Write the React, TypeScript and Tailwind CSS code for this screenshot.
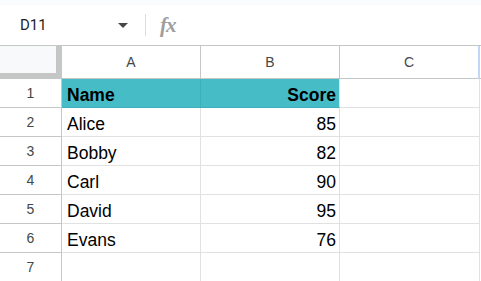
import React from "react";

const rows: { name: string; score: string; header?: boolean }[] = [
  { name: "Name", score: "Score", header: true },
  { name: "Alice", score: "85" },
  { name: "Bobby", score: "82" },
  { name: "Carl", score: "90" },
  { name: "David", score: "95" },
  { name: "Evans", score: "76" },
  { name: "", score: "" },
];

export default function App() {
  return (
    <div className="w-[481px] h-[281px] overflow-hidden bg-white font-['Liberation_Sans',Arial,sans-serif]">
      {/* top strip */}
      <div className="h-[5px] bg-[#f9fbfd]" />

      {/* name box + formula bar */}
      <div className="h-[41px] flex items-center border-b border-[#c4c7c5]">
        <div className="w-[100px] pl-[20px] text-[15px] text-[#1f1f1f] font-['Roboto',sans-serif]">D11</div>
        <svg width="10" height="5" viewBox="0 0 10 5" className="ml-[18px]">
          <path d="M0 0 L10 0 L5 5 Z" fill="#444746" />
        </svg>
        <div className="ml-[17px] w-px h-[22px] bg-[#dadce0]" />
        <div className="ml-[14px] text-[21px] italic font-bold tracking-[-1px] text-[#9e9e9e] font-['Liberation_Serif',serif] leading-none">
          fx
        </div>
      </div>

      {/* column headers */}
      <div className="grid grid-cols-[62px_139px_139px_140px_1fr] h-[33px]">
        <div className="bg-[#f8f9fa] border-r-[6px] border-b-[6px] border-[#c4c7c5]" />
        {["A", "B", "C"].map((c, i) => (
          <div
            key={c}
            className={`flex items-center justify-center text-[14px] text-[#444746] border-b border-[#c4c7c5] ${
              i === 2 ? "border-r-2 border-r-[#c2d7f7]" : "border-r"
            }`}
          >
            {c}
          </div>
        ))}
        <div className="border-b border-[#c4c7c5]" />
      </div>

      {/* rows */}
      {rows.map((r, i) => (
        <div key={i} className="grid grid-cols-[62px_139px_139px_140px_1fr] h-[29px]">
          <div className="flex items-center justify-center text-[14px] text-[#444746] border-r border-b border-[#c4c7c5]">
            {i + 1}
          </div>
          <div
            className={`flex items-end pl-[5px] pb-[3px] text-[17.5px] leading-none text-black border-b border-r ${
              r.header ? "bg-[#46bdc6] font-bold border-[#3fb0b9]" : "border-[#e1e1e1]"
            }`}
          >
            {r.name}
          </div>
          <div
            className={`flex items-end justify-end pr-[3px] pb-[3px] text-[17.5px] leading-none text-black border-b border-r ${
              r.header ? "bg-[#46bdc6] font-bold border-[#e1e1e1] border-b-[#3fb0b9]" : "border-[#e1e1e1]"
            }`}
          >
            {r.score}
          </div>
          <div className="border-b border-r border-[#e1e1e1]" />
          <div />
        </div>
      ))}
    </div>
  );
}
